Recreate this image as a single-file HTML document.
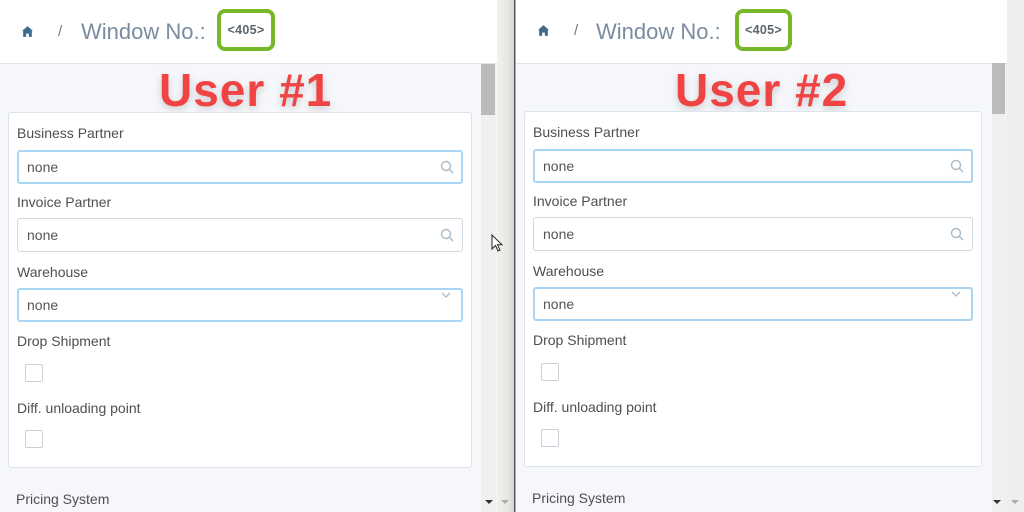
<!DOCTYPE html>
<html><head><meta charset="utf-8"><style>
*{margin:0;padding:0;box-sizing:border-box}
body{width:1024px;height:512px;overflow:hidden;background:#eeeeec;font-family:"Liberation Sans",Arial,sans-serif;position:relative}
.p{position:absolute;top:0;height:512px;background:#f5f7fa;overflow:hidden}
.a{position:absolute}
.hdr{left:0;top:0;height:64px;background:#fff;border-bottom:1px solid #dde3ea}
.lbl{font-size:14px;color:#4f4f4f;white-space:nowrap}
.inp{height:34px;border:1px solid #cfd8e0;border-radius:3px;background:#fff;font-size:14px;color:#555;padding-left:9px;line-height:32px}
.foc{border:2px solid #a8d5f5;padding-left:8px;line-height:30px}
.cb{width:18px;height:18px;border:1px solid #c8d0d8;border-radius:2px;background:#fff}
.user{font-size:46px;font-weight:bold;color:#f04444;text-shadow:0 3px 8px rgba(0,0,0,.18);white-space:nowrap;letter-spacing:1px}
.box{border:4px solid #77b82a;border-radius:8px;background:#fff;font-size:12.5px;font-weight:bold;color:#5a6570;text-align:center;line-height:34px;letter-spacing:.3px}
.sb{background:#f0f0ee}
.th{background:#bbb}
</style></head><body>

<div class="p" style="left:0;width:497px">
  <div class="a hdr" style="width:497px"></div>
  <svg class="a" style="left:21px;top:25px" width="13" height="13" viewBox="0 0 12 12"><path d="M6 1 L11 5.5 L10 5.5 L10 11 L7.3 11 L7.3 8 L4.7 8 L4.7 11 L2 11 L2 5.5 L1 5.5 Z" fill="#3d6a8f"/></svg>
  <div class="a" style="left:58px;top:23px;font-size:15px;color:#6b7a8a">/</div>
  <div class="a" style="left:81px;top:19px;font-size:22px;color:#7a8ca0">Window No.:</div>
  <div class="a box" style="left:217px;top:9px;width:58px;height:42px">&lt;405&gt;</div>
  <div class="a user" style="left:159px;top:63px">User #1</div>
  <div class="a" style="left:8px;top:112px;width:464px;height:356px;background:#fff;border:1px solid #dde3ea;border-radius:3px"></div>
  <div class="a lbl" style="left:17px;top:125px">Business Partner</div>
  <div class="a inp foc" style="left:17px;top:150px;width:446px">none</div>
  <svg class="a" style="left:440px;top:160px" width="14" height="14" viewBox="0 0 14 14"><circle cx="6" cy="6" r="4.5" fill="none" stroke="#a9bac8" stroke-width="1.4"/><path d="M9.3 9.3 L13 13" stroke="#a9bac8" stroke-width="1.4"/></svg>
  <div class="a lbl" style="left:17px;top:194px">Invoice Partner</div>
  <div class="a inp" style="left:17px;top:218px;width:446px">none</div>
  <svg class="a" style="left:440px;top:228px" width="14" height="14" viewBox="0 0 14 14"><circle cx="6" cy="6" r="4.5" fill="none" stroke="#a9bac8" stroke-width="1.4"/><path d="M9.3 9.3 L13 13" stroke="#a9bac8" stroke-width="1.4"/></svg>
  <div class="a lbl" style="left:17px;top:264px">Warehouse</div>
  <div class="a inp foc" style="left:17px;top:288px;width:446px">none</div>
  <svg class="a" style="left:441px;top:292px" width="10" height="6" viewBox="0 0 10 6"><path d="M1 1 L5 5 L9 1" fill="none" stroke="#a9bac8" stroke-width="1.3"/></svg>
  <div class="a lbl" style="left:17px;top:333px">Drop Shipment</div>
  <div class="a cb" style="left:25px;top:364px"></div>
  <div class="a lbl" style="left:17px;top:400px">Diff. unloading point</div>
  <div class="a cb" style="left:25px;top:430px"></div>
  <div class="a lbl" style="left:16px;top:491px">Pricing System</div>
  <div class="a sb" style="left:481px;top:64px;width:15px;height:448px"></div>
  <div class="a th" style="left:481px;top:64px;width:14px;height:51px"></div>
  <div class="a" style="left:485px;top:500px;width:0;height:0;border-left:4px solid transparent;border-right:4px solid transparent;border-top:4px solid #333"></div>
</div>
<div class="a" style="left:497px;top:0;width:17px;height:512px;background:linear-gradient(90deg,#f2f1ec,#e9e8e4 60%,#d5d5d3)"></div>
<div class="a" style="left:501px;top:500px;width:0;height:0;border-left:4px solid transparent;border-right:4px solid transparent;border-top:4px solid #aaa"></div>
<div class="a" style="left:514px;top:0;width:1px;height:512px;background:#555"></div>
<div class="a" style="left:515px;top:0;width:1px;height:512px;background:#c8a868"></div>
<svg class="a" style="left:491px;top:234px" width="12" height="19" viewBox="0 0 12 19"><path d="M1 1 L1 15 L4.5 11.5 L7 17 L9 16 L6.5 10.8 L11 10.8 Z" fill="#fff" stroke="#222" stroke-width="1"/></svg>

<div class="p" style="left:516px;width:491px">
  <div class="a hdr" style="width:491px"></div>
  <svg class="a" style="left:21px;top:24px" width="13" height="13" viewBox="0 0 12 12"><path d="M6 1 L11 5.5 L10 5.5 L10 11 L7.3 11 L7.3 8 L4.7 8 L4.7 11 L2 11 L2 5.5 L1 5.5 Z" fill="#3d6a8f"/></svg>
  <div class="a" style="left:58px;top:22px;font-size:15px;color:#6b7a8a">/</div>
  <div class="a" style="left:80px;top:19px;font-size:22px;color:#7a8ca0">Window No.:</div>
  <div class="a box" style="left:219px;top:9px;width:57px;height:42px">&lt;405&gt;</div>
  <div class="a user" style="left:159px;top:63px">User #2</div>
  <div class="a" style="left:8px;top:111px;width:458px;height:356px;background:#fff;border:1px solid #dde3ea;border-radius:3px"></div>
  <div class="a lbl" style="left:17px;top:124px">Business Partner</div>
  <div class="a inp foc" style="left:17px;top:149px;width:440px">none</div>
  <svg class="a" style="left:434px;top:159px" width="14" height="14" viewBox="0 0 14 14"><circle cx="6" cy="6" r="4.5" fill="none" stroke="#a9bac8" stroke-width="1.4"/><path d="M9.3 9.3 L13 13" stroke="#a9bac8" stroke-width="1.4"/></svg>
  <div class="a lbl" style="left:17px;top:193px">Invoice Partner</div>
  <div class="a inp" style="left:17px;top:217px;width:440px">none</div>
  <svg class="a" style="left:434px;top:227px" width="14" height="14" viewBox="0 0 14 14"><circle cx="6" cy="6" r="4.5" fill="none" stroke="#a9bac8" stroke-width="1.4"/><path d="M9.3 9.3 L13 13" stroke="#a9bac8" stroke-width="1.4"/></svg>
  <div class="a lbl" style="left:17px;top:263px">Warehouse</div>
  <div class="a inp foc" style="left:17px;top:287px;width:440px">none</div>
  <svg class="a" style="left:435px;top:291px" width="10" height="6" viewBox="0 0 10 6"><path d="M1 1 L5 5 L9 1" fill="none" stroke="#a9bac8" stroke-width="1.3"/></svg>
  <div class="a lbl" style="left:17px;top:332px">Drop Shipment</div>
  <div class="a cb" style="left:25px;top:363px"></div>
  <div class="a lbl" style="left:17px;top:399px">Diff. unloading point</div>
  <div class="a cb" style="left:25px;top:429px"></div>
  <div class="a lbl" style="left:16px;top:490px">Pricing System</div>
  <div class="a sb" style="left:476px;top:64px;width:15px;height:448px"></div>
  <div class="a th" style="left:476px;top:63px;width:13px;height:51px"></div>
  <div class="a" style="left:477px;top:500px;width:0;height:0;border-left:4px solid transparent;border-right:4px solid transparent;border-top:4px solid #333"></div>
</div>
<div class="a" style="left:1011px;top:500px;width:0;height:0;border-left:4px solid transparent;border-right:4px solid transparent;border-top:4px solid #aaa"></div>
</body></html>
